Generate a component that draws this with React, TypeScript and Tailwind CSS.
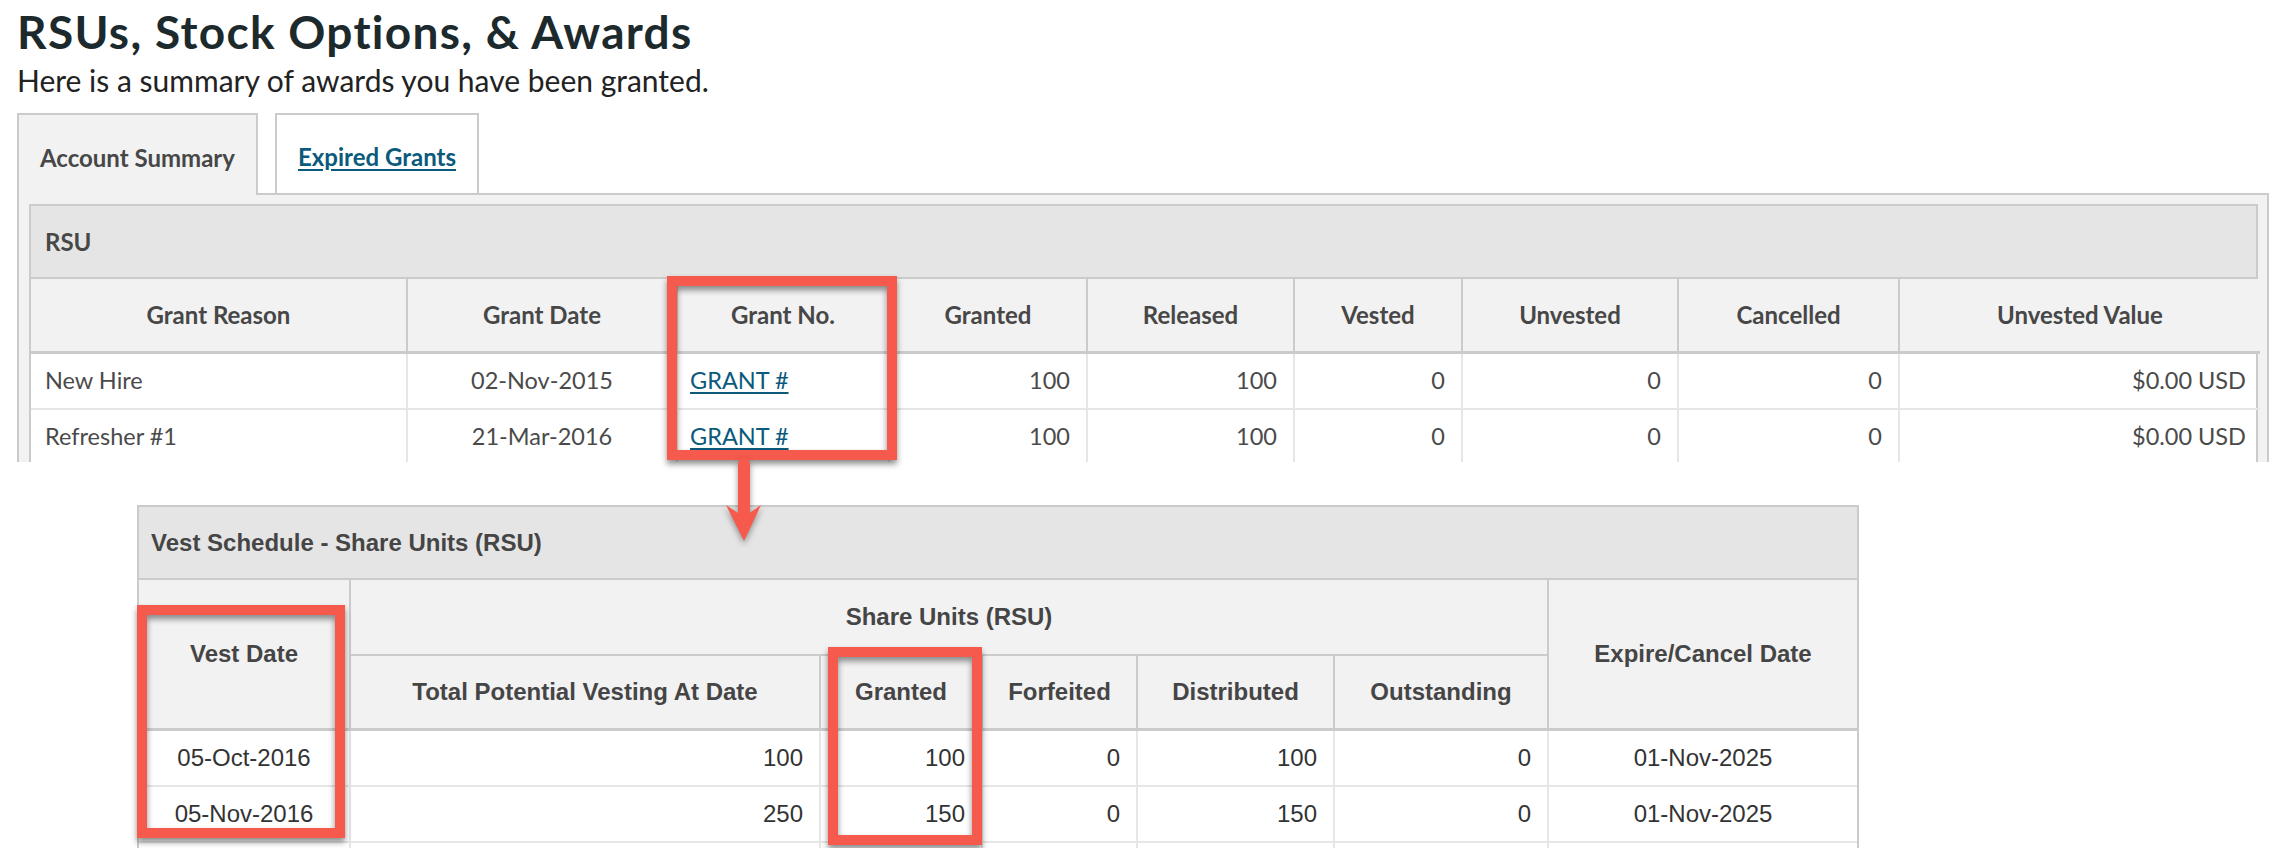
import React from "react";

const topCols = "grid-cols-[377px_270px_212px_198px_207px_168px_216px_221px_360px]";
const bottomCols = "grid-cols-[212px_470px_162px_155px_197px_214px_308px]";

const rsuHeaders = [
  "Grant Reason",
  "Grant Date",
  "Grant No.",
  "Granted",
  "Released",
  "Vested",
  "Unvested",
  "Cancelled",
  "Unvested Value",
];

const rsuRows = [
  { reason: "New Hire", date: "02-Nov-2015", granted: 100, released: 100 },
  { reason: "Refresher #1", date: "21-Mar-2016", granted: 100, released: 100 },
];

const vestRows = [
  { date: "05-Oct-2016", total: "100", granted: "100", forfeited: "0", distributed: "100", outstanding: "0", expire: "01-Nov-2025" },
  { date: "05-Nov-2016", total: "250", granted: "150", forfeited: "0", distributed: "150", outstanding: "0", expire: "01-Nov-2025" },
  { date: "", total: "", granted: "", forfeited: "", distributed: "", outstanding: "", expire: "" },
];

function Callout({ className }: { className: string }) {
  return (
    <div
      className={`absolute border-[10px] border-[#f65a4c] shadow-[0_4px_6px_rgba(0,0,0,0.45),inset_0_4px_6px_rgba(0,0,0,0.45)] ${className}`}
    />
  );
}

function RsuTable() {
  const data = "h-[56px] flex items-center border-b-2 border-[#e6e6e6]";
  return (
    <div className="border-2 border-[#cbcbcb] bg-white">
      <div className="h-[73px] flex items-center px-[14px] bg-[#e5e5e5] border-b-2 border-[#cbcbcb] text-[24px] font-bold text-[#474747]">
        RSU
      </div>
      <div className={`grid ${topCols}`}>
        {rsuHeaders.map((h, i) => (
          <div
            key={h}
            className={`h-[75px] flex items-center justify-center bg-[#f2f2f2] border-b-[3px] border-[#cbcbcb] text-[24px] font-bold text-[#474747] ${
              i < rsuHeaders.length - 1 ? "border-r-2" : ""
            }`}
          >
            {h}
          </div>
        ))}
        {rsuRows.map((r) => (
          <React.Fragment key={r.reason}>
            <div className={`${data} px-[14px] border-r-2`}>{r.reason}</div>
            <div className={`${data} justify-center border-r-2`}>{r.date}</div>
            <div className={`${data} px-[12px] border-r-2`}>
              <a href="#" className="text-[#0b5a7c] underline underline-offset-[3px]">GRANT #</a>
            </div>
            <div className={`${data} justify-end px-[16px] border-r-2`}>{r.granted}</div>
            <div className={`${data} justify-end px-[16px] border-r-2`}>{r.released}</div>
            <div className={`${data} justify-end px-[16px] border-r-2`}>0</div>
            <div className={`${data} justify-end px-[16px] border-r-2`}>0</div>
            <div className={`${data} justify-end px-[16px] border-r-2`}>0</div>
            <div className={`${data} justify-end px-[14px]`}>$0.00 USD</div>
          </React.Fragment>
        ))}
      </div>
    </div>
  );
}

function VestTable() {
  const head = "bg-[#f2f2f2] flex items-center justify-center text-center font-bold text-[#454545]";
  const cell = "h-[56px] flex items-center border-b-2 border-[#e6e6e6] bg-white";
  return (
    <div className="w-[1722px] border-2 border-[#cbcbcb] bg-white font-['Liberation_Sans',Arial,sans-serif] text-[24px] text-[#333]">
      <div className="h-[73px] flex items-center px-[12px] bg-[#e5e5e5] border-b-2 border-[#cbcbcb] font-bold text-[#454545]">
        Vest Schedule - Share Units (RSU)
      </div>
      <div className={`grid ${bottomCols} grid-rows-[76px_75px]`}>
        <div className={`${head} row-span-2 border-r-2 border-b-[3px] border-[#cbcbcb]`}>Vest Date</div>
        <div className={`${head} col-span-5 border-r-2 border-b-2 border-[#cbcbcb]`}>Share Units (RSU)</div>
        <div className={`${head} row-span-2 border-b-[3px] border-[#cbcbcb]`}>Expire/Cancel Date</div>
        <div className={`${head} border-r-2 border-b-[3px] border-[#cbcbcb]`}>Total Potential Vesting At Date</div>
        <div className={`${head} border-r-2 border-b-[3px] border-[#cbcbcb]`}>Granted</div>
        <div className={`${head} border-r-2 border-b-[3px] border-[#cbcbcb]`}>Forfeited</div>
        <div className={`${head} border-r-2 border-b-[3px] border-[#cbcbcb]`}>Distributed</div>
        <div className={`${head} border-r-2 border-b-[3px] border-[#cbcbcb]`}>Outstanding</div>
      </div>
      <div className={`grid ${bottomCols}`}>
        {vestRows.map((r, i) => (
          <React.Fragment key={i}>
            <div className={`${cell} justify-center border-r-2`}>{r.date}</div>
            <div className={`${cell} justify-end px-[16px] border-r-2`}>{r.total}</div>
            <div className={`${cell} justify-end px-[16px] border-r-2`}>{r.granted}</div>
            <div className={`${cell} justify-end px-[16px] border-r-2`}>{r.forfeited}</div>
            <div className={`${cell} justify-end px-[16px] border-r-2`}>{r.distributed}</div>
            <div className={`${cell} justify-end px-[16px] border-r-2`}>{r.outstanding}</div>
            <div className={`${cell} justify-center`}>{r.expire}</div>
          </React.Fragment>
        ))}
      </div>
    </div>
  );
}

export default function App() {
  return (
    <main className="relative w-[2274px] h-[848px] overflow-hidden bg-white">
      {/* account summary screenshot, cut off under the second row */}
      <div className="h-[462px] overflow-hidden px-[17px] font-['Lato',sans-serif] text-[#4a4a4a]">
        <h1 className="pt-[6px] text-[46px] leading-[52px] tracking-[1.3px] font-bold text-[#1d2a2d]">
          RSUs, Stock Options, &amp; Awards
        </h1>
        <p className="mt-[4px] text-[30px] leading-[36px] text-[#222]">Here is a summary of awards you have been granted.</p>

        <div className="mt-[15px] flex items-end gap-[17px]">
          <div className="relative z-10 -mb-[2px] w-[241px] h-[82px] flex items-center justify-center pt-[6px] bg-[#f2f2f2] border-2 border-b-0 border-[#cbcbcb] text-[24px] font-bold text-[#474747]">
            Account Summary
          </div>
          <div className="w-[204px] h-[80px] flex items-center justify-center pt-[6px] bg-white border-2 border-b-0 border-[#cbcbcb] text-[24px] font-bold">
            <a href="#" className="text-[#0b5a7c] underline underline-offset-[3px]">Expired Grants</a>
          </div>
        </div>

        <div className="w-[2252px] h-[400px] border-2 border-[#cbcbcb] bg-[#f2f2f2] pt-[9px] pl-[10px] pr-[9px] text-[23.5px]">
          <RsuTable />
        </div>
      </div>

      {/* vest schedule screenshot */}
      <div className="mt-[43px] ml-[137px]">
        <VestTable />
      </div>

      {/* annotations */}
      <Callout className="left-[667px] top-[276px] w-[230px] h-[184px]" />
      <Callout className="left-[137px] top-[605px] w-[208px] h-[233px]" />
      <Callout className="left-[828px] top-[647px] w-[154px] h-[198px]" />
      <svg
        className="absolute left-[720px] top-[455px] drop-shadow-[0_3px_3px_rgba(0,0,0,0.4)]"
        width="50"
        height="95"
        viewBox="0 0 50 95"
      >
        <line x1="24" y1="9" x2="24" y2="64" stroke="#f65a4c" strokeWidth="12" strokeLinecap="round" />
        <polygon points="6,50 24,86 41,50 24,62" fill="#f65a4c" />
      </svg>
    </main>
  );
}
